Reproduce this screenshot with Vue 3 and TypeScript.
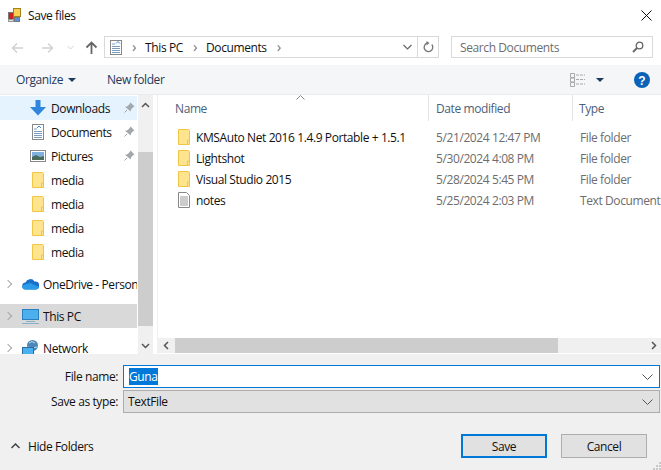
<template>
  <div class="dialog">
    <header class="titlebar">
      <svg class="app-icon" width="14" height="14" viewBox="0 0 14 14">
        <rect x="1.500" y="4.500" width="5" height="7" fill="#c22" stroke="#777" />
        <rect x="6.500" y="0.500" width="7" height="8" fill="#f8d050" stroke="#a08020" />
        <rect x="7.500" y="9.500" width="5" height="4" fill="#5a8ee0" stroke="#777" />
        <rect x="1.500" y="11.500" width="5" height="2" fill="#ddd" stroke="#999" />
      </svg>
      <span class="title">Save files</span>
      <svg class="close" width="11" height="11" viewBox="0 0 11 11">
        <path d="M.5.500l10 10M10.500.500l-10 10" stroke="#111" fill="none" />
      </svg>
    </header>

    <div class="navbar">
      <svg width="13" height="12" viewBox="0 0 13 12" class="nav-arrow">
        <path d="M12 6H1.500M6 1.500L1.500 6 6 10.500" stroke="#d0d0d0" stroke-width="1.300" fill="none" />
      </svg>
      <svg width="13" height="12" viewBox="0 0 13 12" class="nav-arrow fwd">
        <path d="M1 6h10.500M7 1.500L11.500 6 7 10.500" stroke="#d0d0d0" stroke-width="1.300" fill="none" />
      </svg>
      <svg width="7" height="5" viewBox="0 0 7 5" class="nav-drop">
        <path d="M.5 1l3 3 3-3" stroke="#d0d0d0" fill="none" />
      </svg>
      <svg width="13" height="13" viewBox="0 0 13 13" class="nav-up">
        <path d="M6.500 13V2M1.500 6.500l5-5 5 5" stroke="#666" stroke-width="1.800" fill="none" />
      </svg>
      <div class="address">
        <svg width="12" height="15" viewBox="0 0 12 15" class="addr-icon">
          <rect x=".5" y=".5" width="11" height="14" fill="#fff" stroke="#888" />
          <path d="M2 4h3M2 6.500h8M2 8.500h8M2 10.500h8M2 12.500h8" stroke="#7a9cc0" fill="none" />
          <path d="M6 3.500l2-2 2 2" stroke="#3a88d8" fill="none" />
        </svg>
        <span class="chev">›</span>
        <span class="crumb">This PC</span>
        <span class="chev">›</span>
        <span class="crumb">Documents</span>
        <span class="chev">›</span>
        <svg width="9" height="6" viewBox="0 0 9 6" class="addr-drop">
          <path d="M.5 1l4 4 4-4" stroke="#666" stroke-width="1.200" fill="none" />
        </svg>
        <div class="refresh">
          <svg width="11" height="12" viewBox="0 0 11 12">
            <path d="M8.800 3.500A4.300 4.300 0 1 1 4 2.200" stroke="#777" stroke-width="1.300" fill="none" />
            <path d="M3.500 0v4.500L6.500 2z" fill="#777" />
          </svg>
        </div>
      </div>
      <div class="search">
        <span>Search Documents</span>
        <svg width="12" height="12" viewBox="0 0 12 12">
          <circle cx="7.500" cy="4.500" r="3.300" stroke="#666" stroke-width="1.300" fill="none" />
          <path d="M5 7l-4 4" stroke="#666" stroke-width="1.800" fill="none" />
        </svg>
      </div>
    </div>

    <div class="toolbar">
      <span class="tool">Organize</span>
      <span class="caret"></span>
      <span class="tool new-folder">New folder</span>
      <svg width="16" height="14" viewBox="0 0 16 14" class="view-icon">
        <path d="M.5.500h4v4h-4zM.5 5h4v4h-4zM.5 9.500h4v4h-4z" stroke="#a8a8a8" fill="none" />
        <path d="M6 2h9M6 6.500h9M6 11h9" stroke="#a8a8a8" fill="none" stroke-dasharray="3 1" />
      </svg>
      <span class="caret view-caret"></span>
      <svg width="16" height="16" viewBox="0 0 16 16" class="help">
        <circle cx="8" cy="8" r="8" fill="#0a63b8" />
        <text x="8" y="12.500" text-anchor="middle" class="help-q">?</text>
      </svg>
    </div>

    <main class="panes">
      <nav class="sidebar">
        <div class="tree">
          <div v-for="item in quick" :key="item.id" class="row quick" :class="{ hot: item.icon === 'down' }">
            <span class="row-icon">
              <svg v-if="item.icon === 'down'" width="16" height="16" viewBox="0 0 16 16">
                <path d="M5.500 0h5v7H16l-8 8.500L0 7h5.500z" fill="#2f86dc" />
              </svg>
              <svg v-else-if="item.icon === 'docs'" width="12" height="16" viewBox="0 0 12 16">
                <rect x=".5" y=".5" width="11" height="15" fill="#fff" stroke="#888" />
                <path d="M2 5h3M2 7.500h8M2 9.500h8M2 11.500h8M2 13.500h8" stroke="#7a9cc0" fill="none" />
                <path d="M5 4l2-2 2 2" stroke="#3a88d8" fill="none" />
              </svg>
              <svg v-else-if="item.icon === 'pics'" width="16" height="12" viewBox="0 0 16 12">
                <rect x=".5" y=".5" width="15" height="11" fill="#fff" stroke="#888" />
                <rect x="2" y="2" width="12" height="8" fill="#7fb0e0" />
                <path d="M2 7l4-2 4 2 4-1v4H2z" fill="#4a6a5a" />
              </svg>
              <svg v-else width="12" height="16" viewBox="0 0 12 16">
                <path d="M.5.500h10.200l.8.800V15.500H.5z" fill="#ffe48f" stroke="#eec643" />
                <path d="M9.500 15.500V11h2" fill="none" stroke="#eec643" />
              </svg>
            </span>
            <span class="label">{{ item.label }}</span>
            <svg v-if="item.pinned" class="pin" width="11" height="11" viewBox="0 0 11 11">
              <path d="M6.500.5l4 4-1.500.7-2 2.300-.3 2L1 4.800l2-.3 2.300-2z" fill="#a0a7ad" />
              <path d="M3 8l-2.500 2.500" stroke="#a0a7ad" fill="none" />
            </svg>
          </div>

          <div class="row root">
            <span class="twisty"></span>
            <svg class="root-icon" width="17" height="12" viewBox="0 0 17 12">
              <path d="M4 11.500a3.500 3.500 0 0 1-.5-7 5 5 0 0 1 9-1 3.800 3.800 0 0 1 1.500 8z" fill="#1a70c8" />
              <path d="M0 9a3 3 0 0 1 3-2.500L8 5l9 4a3 3 0 0 1-3 2.500H4A3.500 3.500 0 0 1 0 9z" fill="#2b9be8" />
            </svg>
            <span class="label">OneDrive - Personal</span>
          </div>
          <div class="row root selected">
            <span class="twisty"></span>
            <svg class="root-icon" width="17" height="15" viewBox="0 0 17 15">
              <rect x=".5" y=".5" width="16" height="10" fill="#4db0ee" stroke="#2a7fbf" />
              <path d="M4 12.500h9" stroke="#8ab0c8" />
              <path d="M0 14.500h17" stroke="#8ab0c8" />
            </svg>
            <span class="label">This PC</span>
          </div>
          <div class="row root">
            <span class="twisty"></span>
            <svg class="root-icon" width="17" height="16" viewBox="0 0 17 16">
              <circle cx="10.500" cy="5.500" r="5.500" fill="#4a88b8" />
              <path d="M7 3q3-3 6 0M6 7q4 2 9 0" stroke="#b8d8ee" fill="none" />
              <rect x=".5" y="7.500" width="11" height="7" fill="#4db0ee" stroke="#2a6ca8" />
              <path d="M0 15.500h12" stroke="#2a6ca8" />
            </svg>
            <span class="label">Network</span>
          </div>
        </div>
        <div class="vscroll">
          <svg width="9" height="6" viewBox="0 0 9 6" class="sb-up">
            <path d="M1 5l3.500-3.500L8 5" stroke="#555" stroke-width="1.500" fill="none" />
          </svg>
          <div class="vthumb"></div>
          <svg width="9" height="6" viewBox="0 0 9 6" class="sb-down">
            <path d="M1 1l3.500 3.500L8 1" stroke="#555" stroke-width="1.500" fill="none" />
          </svg>
        </div>
      </nav>

      <section class="files">
        <div class="columns">
          <span class="col col-name">Name</span>
          <span class="col col-date">Date modified</span>
          <span class="col col-type">Type</span>
          <svg class="sort" width="9" height="5" viewBox="0 0 9 5">
            <path d="M.5 4.500l4-4 4 4" stroke="#888" fill="none" />
          </svg>
        </div>
        <div class="list">
          <div v-for="file in files" :key="file.name" class="file">
            <span class="file-icon">
              <svg v-if="file.folder" width="12" height="16" viewBox="0 0 12 16">
                <path d="M.5.500h10.200l.8.800V15.500H.5z" fill="#ffe48f" stroke="#eec643" />
                <path d="M9.500 15.500V11h2" fill="none" stroke="#eec643" />
              </svg>
              <svg v-else width="12" height="16" viewBox="0 0 12 16">
                <path d="M.5.500h8l3 3v12H.5z" fill="#fff" stroke="#888" />
                <path d="M2 5h8M2 7h8M2 9h8M2 11h8M2 13h8" stroke="#999" fill="none" />
              </svg>
            </span>
            <span class="file-name">{{ file.name }}</span>
            <span class="file-meta">{{ file.date }}</span>
            <span class="file-meta">{{ file.type }}</span>
          </div>
        </div>
        <div class="hscroll">
          <svg width="6" height="9" viewBox="0 0 6 9" class="sb-left">
            <path d="M5 1L1.500 4.500 5 8" stroke="#555" stroke-width="1.500" fill="none" />
          </svg>
          <div class="hthumb"></div>
          <svg width="6" height="9" viewBox="0 0 6 9" class="sb-right">
            <path d="M1 1l3.500 3.500L1 8" stroke="#555" stroke-width="1.500" fill="none" />
          </svg>
        </div>
      </section>
    </main>

    <footer class="bottom">
      <div class="form">
        <label class="field-label">File name:</label>
        <div class="combo name-combo">
          <span class="selection">Guna</span>
          <svg width="11" height="6" viewBox="0 0 11 6" class="combo-arrow">
            <path d="M.5.500l5 5 5-5" stroke="#555" fill="none" />
          </svg>
        </div>
        <label class="field-label">Save as type:</label>
        <div class="combo type-combo">
          <span>TextFile</span>
          <svg width="11" height="6" viewBox="0 0 11 6" class="combo-arrow">
            <path d="M.5.500l5 5 5-5" stroke="#555" fill="none" />
          </svg>
        </div>
      </div>
      <div class="actions">
        <svg width="9" height="6" viewBox="0 0 9 6" class="hide-arrow">
          <path d="M.5 5l4-4 4 4" stroke="#444" stroke-width="1.500" fill="none" />
        </svg>
        <span class="hide-label">Hide Folders</span>
        <button class="btn primary">Save</button>
        <button class="btn">Cancel</button>
      </div>
      <svg class="grip" width="8" height="8" viewBox="0 0 8 8">
        <path d="M6 0h2v2H6zM3 3h2v2H3zM6 3h2v2H6zM0 6h2v2H0zM3 6h2v2H3zM6 6h2v2H6z" fill="#c8c8c8" />
      </svg>
    </footer>
  </div>
</template>

<script setup lang="ts">
type QuickItem = { id: number; label: string; icon: string; pinned: boolean };
type FileItem = { name: string; date: string; type: string; folder: boolean };

const quick: QuickItem[] = [
  { id: 1, label: 'Downloads', icon: 'down', pinned: true },
  { id: 2, label: 'Documents', icon: 'docs', pinned: true },
  { id: 3, label: 'Pictures', icon: 'pics', pinned: true },
  { id: 4, label: 'media', icon: 'folder', pinned: false },
  { id: 5, label: 'media', icon: 'folder', pinned: false },
  { id: 6, label: 'media', icon: 'folder', pinned: false },
  { id: 7, label: 'media', icon: 'folder', pinned: false },
];

const files: FileItem[] = [
  { name: 'KMSAuto Net 2016 1.4.9 Portable + 1.5.1', date: '5/21/2024 12:47 PM', type: 'File folder', folder: true },
  { name: 'Lightshot', date: '5/30/2024 4:08 PM', type: 'File folder', folder: true },
  { name: 'Visual Studio 2015', date: '5/28/2024 5:45 PM', type: 'File folder', folder: true },
  { name: 'notes', date: '5/25/2024 2:03 PM', type: 'Text Document', folder: false },
];
</script>

<style scoped>
.dialog {
  width: 661px; height: 470px; background: #fff; overflow: hidden;
  display: flex; flex-direction: column;
  font-family: "Open Sans", "Noto Sans", sans-serif; font-size: 12px; color: #111;
  letter-spacing: -0.4px;
}
.titlebar { height: 30px; display: flex; align-items: center; padding: 0 9px 0 7px; flex: none; }
.app-icon { margin-right: 7px; }
.title { flex: 1; }
.navbar { height: 35px; flex: none; display: flex; align-items: flex-start; padding-top: 6px; box-sizing: border-box; }
.nav-arrow { margin: 6px 0 0 11px; }
.nav-arrow.fwd { margin-left: 17px; }
.nav-drop { margin: 9px 0 0 13px; }
.nav-up { margin: 5px 0 0 11px; }
.address {
  margin-left: 6px; width: 335px; height: 22px; border: 1px solid #d9d9d9; box-sizing: border-box;
  display: flex; align-items: center; padding-left: 5px;
}
.chev { color: #777; font-size: 15px; line-height: 16px; margin: -2px 9px 0 10px; }
.addr-drop { margin-left: auto; margin-right: 5px; }
.refresh { width: 20px; height: 20px; border-left: 1px solid #d9d9d9; display: flex; align-items: center; justify-content: center; }
.search {
  margin-left: 12px; width: 202px; height: 22px; border: 1px solid #d9d9d9; box-sizing: border-box;
  display: flex; align-items: center; justify-content: space-between; padding: 0 8px 0 8px; color: #6d6d6d;
}
.toolbar {
  height: 30px; flex: none; background: #f5f6f7; border-bottom: 1px solid #e9ebee; box-sizing: border-box;
  display: flex; align-items: center; padding-left: 16px; color: #1e3a5f;
}
.caret { width: 0; height: 0; border: 4px solid transparent; border-top-color: #1e3a5f; border-bottom: 0; margin-left: 5px; }
.new-folder { margin-left: 31px; }
.view-icon { margin-left: auto; }
.view-caret { margin-left: 10px; }
.help { margin: 0 11px 0 30px; }
.help-q { font: bold 12px "Liberation Sans", sans-serif; fill: #fff; letter-spacing: 0; }
.panes { height: 259px; flex: none; display: flex; }
.sidebar { width: 153px; flex: none; display: flex; overflow: hidden; }
.tree { width: 137px; flex: none; overflow: hidden; margin-top: 1px; }
.row { height: 24px; display: flex; align-items: center; white-space: nowrap; position: relative; }
.row.hot { background: #e5f3ff; }
.row-icon { width: 16px; margin: 0 5px 0 30px; display: flex; align-items: center; justify-content: center; flex: none; }
.pin { position: absolute; left: 124px; top: 6px; }
.root { margin-top: 8px; }
.root .label { margin-left: 4px; }
.selected { background: #d9d9d9; }
.twisty {
  width: 5px; height: 5px; border: solid #a6a6a6; border-width: 1.500px 1.500px 0 0; transform: rotate(45deg);
  margin-left: 5px; margin-right: 11px; flex: none;
}
.root-icon { flex: none; }
.vscroll { width: 15px; margin-left: 1px; flex: none; background: #f0f0f0; display: flex; flex-direction: column; align-items: center; }
.sb-up { margin-top: 7px; flex: none; }
.vthumb { align-self: stretch; height: 174px; margin-top: 44px; background: #cdcdcd; flex: none; }
.sb-down { margin-top: 17px; flex: none; }
.files { flex: 1; min-width: 0; margin-left: 4px; display: flex; flex-direction: column; border-left: 1px solid #f0f0f0; }
.columns { height: 26px; flex: none; display: grid; grid-template-columns: 271px 144px 1fr; align-items: center; color: #4c607a; position: relative; }
.col { height: 100%; display: flex; align-items: center; box-sizing: border-box; padding-left: 6px; }
.col-name { padding-left: 17px; border-right: 1px solid #e5e5e5; }
.col-date { padding-left: 7px; border-right: 1px solid #e5e5e5; }
.sort { position: absolute; left: 138px; top: 0; }
.list { flex: 1; padding-top: 6px; overflow: hidden; }
.file { height: 21px; display: grid; grid-template-columns: 38px 240px 144px 1fr; align-items: center; white-space: nowrap; }
.file-icon { padding-left: 20px; display: flex; align-items: center; margin-top: -1px; }
.file-meta { color: #6d6d6d; }
.hscroll { height: 15px; flex: none; margin-bottom: 1px; background: #f0f0f0; display: flex; align-items: center; position: relative; }
.sb-left { margin-left: 5px; }
.hthumb { width: 383px; height: 15px; margin-left: 6px; background: #cdcdcd; }
.sb-right { margin-left: auto; margin-right: 4px; }
.bottom { flex: 1; background: #f0f0f0; position: relative; display: flex; flex-direction: column; }
.form { display: grid; grid-template-columns: 118px 537px; column-gap: 5px; row-gap: 2px; margin-top: 11px; align-items: center; }
.field-label { text-align: right; }
.combo { height: 23px; box-sizing: border-box; display: flex; align-items: center; justify-content: space-between; padding: 0 4px 0 4px; }
.name-combo { background: #fff; border: 1px solid #0078d7; padding-left: 5px; }
.selection { background: #0078d7; color: #fff; line-height: 17px; }
.type-combo { background: #e1e1e1; border: 1px solid #adadad; }
.combo-arrow { margin-right: 2px; }
.actions { display: flex; align-items: center; margin-top: 21px; }
.hide-arrow { margin-left: 11px; }
.hide-label { margin-left: 8px; }
.btn {
  width: 86px; height: 24px; background: #e1e1e1; border: 1px solid #adadad; box-sizing: border-box; padding: 0;
  font: inherit; letter-spacing: inherit; color: #111; margin-left: 14px;
}
.primary { margin-left: auto; border: 2px solid #0078d7; }
.actions .btn:last-of-type { margin-right: 14px; }
.grip { position: absolute; right: 0; bottom: 0; }
</style>
